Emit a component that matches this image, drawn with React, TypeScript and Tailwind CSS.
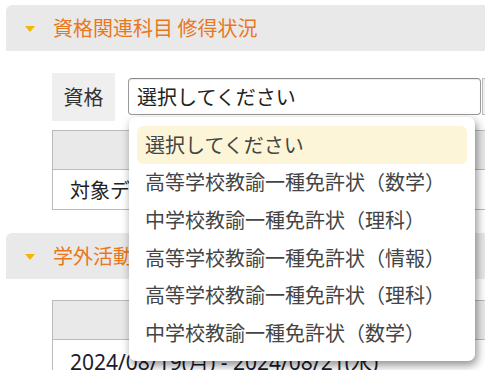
const jp = { fontFamily: '"Noto Sans CJK JP", "Noto Sans", sans-serif' };

const options = [
  '選択してください',
  '高等学校教諭一種免許状（数学）',
  '中学校教諭一種免許状（理科）',
  '高等学校教諭一種免許状（情報）',
  '高等学校教諭一種免許状（理科）',
  '中学校教諭一種免許状（数学）',
];

function SectionHeader({ title }: { title: string }) {
  return (
    <div className="flex h-[46px] items-center rounded-tl-md bg-[#e9e9e9] pl-[19px]">
      <span className="mt-[1px] h-0 w-0 border-x-[5px] border-t-[6px] border-x-transparent border-t-[#f2b705]" />
      <span className="ml-[18px] text-[20px] leading-none text-[#e8781f]">{title}</span>
    </div>
  );
}

export default function App() {
  return (
    <div className="h-[370px] w-[485px] overflow-hidden bg-white pl-[6px] pt-[5px]" style={jp}>
      <div className="w-[600px]">
        <SectionHeader title="資格関連科目 修得状況" />

        <div className="ml-[46px] mt-[22px] flex items-start">
          <div className="flex h-[48px] w-[63px] items-center justify-center bg-[#efefef] text-[20px] text-[#333]">
            資格
          </div>
          <div className="relative ml-[13px] mt-[5px]">
            <div className="flex h-[37px] w-[353px] items-center rounded-[4px] border border-[#9a9a9a] border-t-[#8a8a8a] bg-white pl-[8px] text-[20px] text-[#222] shadow-[inset_0_1px_1px_rgba(0,0,0,0.08)]">
              選択してください
            </div>
            <div className="absolute left-[1px] top-[39px] z-10 w-[346px] rounded-[7px] bg-white px-[8px] py-[9px] shadow-[2px_4px_10px_rgba(0,0,0,0.45)]">
              {options.map((o, i) => (
                <div
                  key={o}
                  className={
                    i === 0
                      ? 'flex h-[37.6px] items-center rounded-[6px] bg-[#fdf5d8] pl-[8px] text-[20px] text-[#444]'
                      : 'flex h-[37.6px] items-center pl-[8px] text-[20px] text-[#444]'
                  }
                >
                  {o}
                </div>
              ))}
            </div>
          </div>
          <div className="ml-[1px] mt-[5px] h-[37px] w-[40px] border border-[#bbb] bg-[#efefef]" />
        </div>

        <div className="ml-[46px] mt-[9px] w-[500px] border border-[#bbb]">
          <div className="h-[39px] border-b border-[#bbb] bg-[#e9e9e9]" />
          <div className="flex h-[39px] items-center pl-[17px] text-[20px] text-[#222]">対象データはありません</div>
        </div>

        <div className="mt-[23px]">
          <SectionHeader title="学外活動実績" />
        </div>

        <div className="ml-[46px] mt-[21px] w-[500px] border border-[#bbb]">
          <div className="h-[39px] border-b border-[#bbb] bg-[#e9e9e9]" />
          <div
            className="flex h-[39px] items-center pl-[17px] pt-[6px] text-[21px] text-[#1a1a2e]"
            style={{ fontFamily: '"Noto Sans", "Noto Sans CJK JP", sans-serif' }}
          >
            2024/08/19(月) - 2024/08/21(水)
          </div>
        </div>
      </div>
    </div>
  );
}
